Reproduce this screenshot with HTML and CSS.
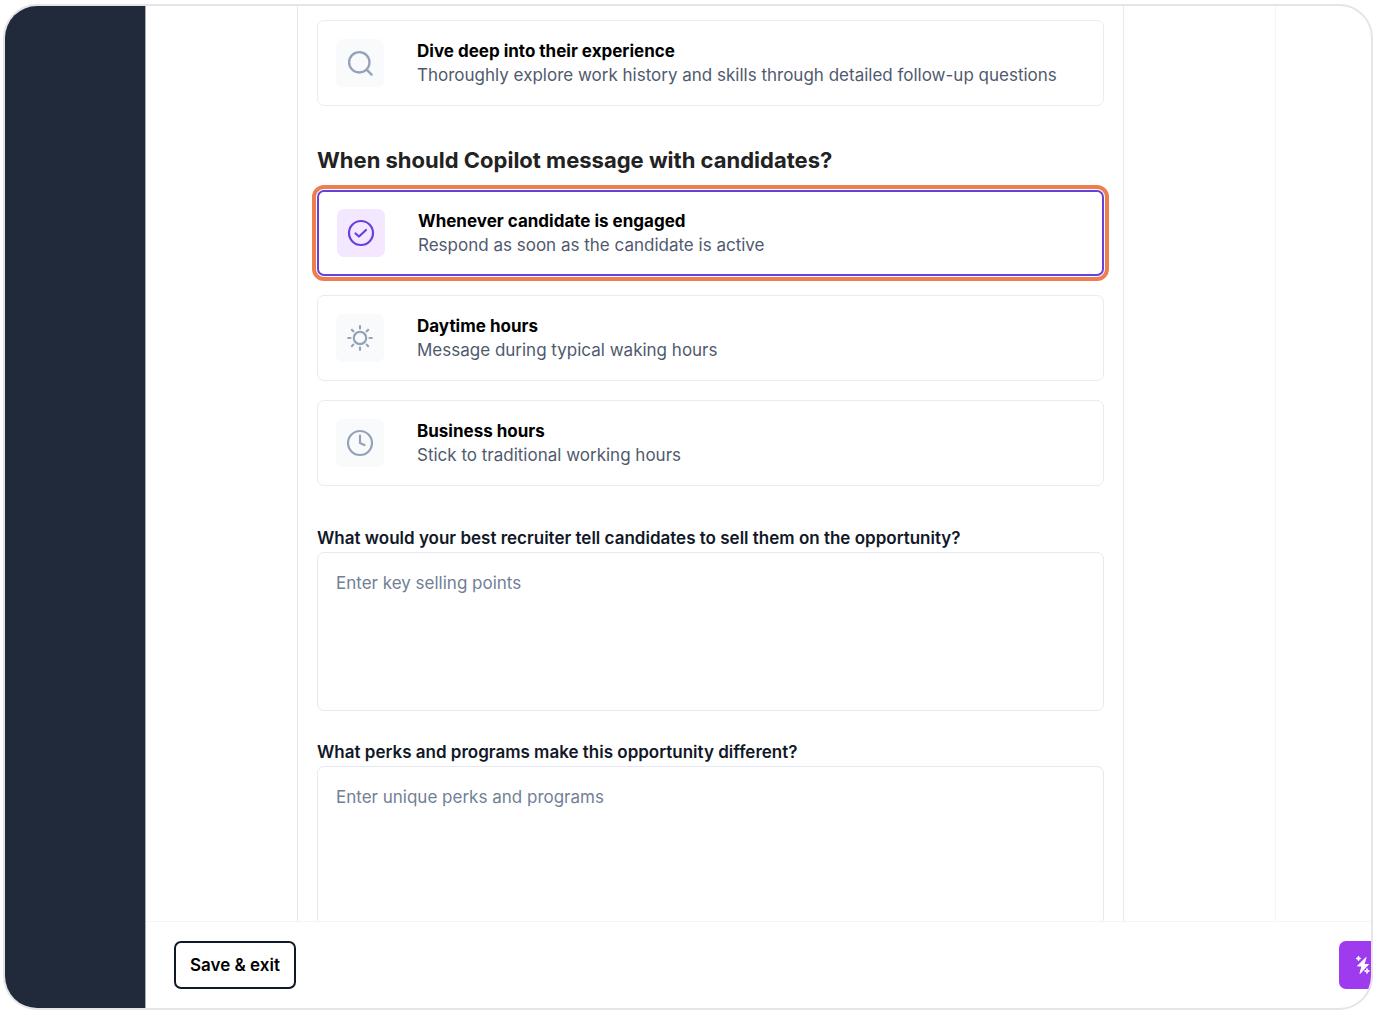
FILE: index.html
```html
<!DOCTYPE html>
<html lang="en">
<head>
    <meta charset="UTF-8">
    <meta name="viewport" content="width=device-width, initial-scale=1.0">
    <title>Copilot settings</title>
    <link rel="stylesheet" href="styles.css">
</head>
<body>
    <div class="window">
        <aside class="sidebar"></aside>
        <div class="main">
            <div class="scroll-area">
                <div class="page">
                    <form class="panel" id="copilot-form">
                        <label class="option">
                            <input type="radio" name="depth" value="deep">
                            <span class="option-icon">
                                <svg width="32" height="32" viewBox="0 0 32 32" fill="none" stroke="currentColor" stroke-width="2.3" stroke-linecap="round">
                                    <circle cx="15.3" cy="15.3" r="10.2"/>
                                    <path d="M22.6 22.6l5 5"/>
                                </svg>
                            </span>
                            <span class="option-text">
                                <span class="option-title">Dive deep into their experience</span>
                                <span class="option-desc">Thoroughly explore work history and skills through detailed follow-up questions</span>
                            </span>
                        </label>

                        <h2>When should Copilot message with candidates?</h2>
                        <div class="options">
                            <label class="option">
                                <input type="radio" name="timing" value="engaged" checked>
                                <span class="option-icon">
                                    <svg width="32" height="32" viewBox="0 0 32 32" fill="none" stroke="currentColor" stroke-width="2.2" stroke-linecap="round" stroke-linejoin="round">
                                        <circle cx="16" cy="16" r="12"/>
                                        <path d="M10.5 16.5l3.5 3 7-6.5"/>
                                    </svg>
                                </span>
                                <span class="option-text">
                                    <span class="option-title">Whenever candidate is engaged</span>
                                    <span class="option-desc">Respond as soon as the candidate is active</span>
                                </span>
                            </label>
                            <label class="option">
                                <input type="radio" name="timing" value="daytime">
                                <span class="option-icon">
                                    <svg width="32" height="32" viewBox="0 0 32 32" fill="none" stroke="currentColor" stroke-width="2.2" stroke-linecap="round">
                                        <circle cx="16" cy="16" r="6.2"/>
                                        <path d="M16 4.2v2.3M16 25.5v2.3M4.2 16h2.3M25.5 16h2.3M7.8 7.8l1.5 1.5M22.7 22.7l1.5 1.5M7.8 24.2l1.5-1.5M22.7 9.3l1.5-1.5"/>
                                    </svg>
                                </span>
                                <span class="option-text">
                                    <span class="option-title">Daytime hours</span>
                                    <span class="option-desc">Message during typical waking hours</span>
                                </span>
                            </label>
                            <label class="option">
                                <input type="radio" name="timing" value="business">
                                <span class="option-icon">
                                    <svg width="32" height="32" viewBox="0 0 32 32" fill="none" stroke="currentColor" stroke-width="2.2" stroke-linecap="round" stroke-linejoin="round">
                                        <circle cx="16" cy="16" r="12"/>
                                        <path d="M16 8.5V16l4.5 2"/>
                                    </svg>
                                </span>
                                <span class="option-text">
                                    <span class="option-title">Business hours</span>
                                    <span class="option-desc">Stick to traditional working hours</span>
                                </span>
                            </label>
                        </div>

                        <div class="fields">
                            <div class="field">
                                <label for="selling-points">What would your best recruiter tell candidates to sell them on the opportunity?</label>
                                <textarea id="selling-points" placeholder="Enter key selling points"></textarea>
                            </div>
                            <div class="field">
                                <label for="perks">What perks and programs make this opportunity different?</label>
                                <textarea id="perks" placeholder="Enter unique perks and programs"></textarea>
                            </div>
                        </div>
                    </form>
                </div>
            </div>
            <footer class="footer">
                <button type="submit" form="copilot-form" class="btn-save">Save &amp; exit</button>
                <button type="button" class="btn-launch" aria-label="Launch Copilot">
                    <svg width="20" height="24" viewBox="0 0 20 24" fill="currentColor" stroke="currentColor" stroke-linejoin="round">
                        <path d="M13 4.5L4.5 13H9l-2 7.5 8.500-9h-4.500z"/>
                        <path d="M5.5 3l.6 1.9 1.9.6-1.9.6-.6 1.900-.6-1.900L3 5.500l1.900-.6z"/>
                        <path d="M14 15.500l.6 1.900 1.900.6-1.900.6-.6 1.900-.6-1.900-1.900-.6 1.900-.6z"/>
                    </svg>
                </button>
            </footer>
        </div>
    </div>
</body>
</html>
```

FILE: styles.css
```css
* {
    box-sizing: border-box;
}

body {
    margin: 0;
    height: 100vh;
    padding: 4px 5px 6px 3px;
    background: #fff;
    font-family: Inter, sans-serif;
    font-size: 17px;
    line-height: 24px;
    color: #000;
}

.window {
    display: flex;
    height: 100%;
    border: 2px solid #e5e5e9;
    border-radius: 34px;
    overflow: hidden;
}

.sidebar {
    flex: none;
    width: 141px;
    background: #212a3a;
    border-right: 1px solid #a6aab1;
}

.main {
    flex: 1;
    min-width: 0;
    display: flex;
    flex-direction: column;
}

.scroll-area {
    flex: 1;
    min-height: 0;
    padding-right: 95px;
    overflow: hidden;
}

.page {
    height: 100%;
    padding: 0 151px;
    border-right: 1px solid #f4f5f9;
}

.panel {
    min-height: 100%;
    padding: 14px 19px;
    border: 1px solid #e6e8ef;
    border-width: 0 1px;
}

h2 {
    margin: 40px 0 16px;
    font-size: 22px;
    line-height: 28px;
    font-weight: 700;
    color: #222;
}

.options {
    display: flex;
    flex-direction: column;
    gap: 19px;
}

.option {
    display: flex;
    align-items: center;
    gap: 33px;
    padding: 18px;
    border: 1px solid #e9ebf3;
    border-radius: 7px;
    cursor: pointer;
}

.option input {
    position: absolute;
    opacity: 0;
}

.option-icon {
    flex: none;
    display: flex;
    align-items: center;
    justify-content: center;
    width: 48px;
    height: 48px;
    border-radius: 7px;
    background: #f8fafc;
    color: #94a3b8;
}

.option-text {
    display: flex;
    flex-direction: column;
}

.option-title {
    font-weight: 700;
}

.option-desc {
    color: #4f5a6e;
}

.option:has(:checked) {
    padding: 17px 18px;
    border: 2px solid #6741d9;
    outline: 4px solid #ee7d50;
    outline-offset: 1px;
}

.option:has(:checked) .option-icon {
    background: #f3e8ff;
    color: #6741d9;
}

.fields {
    display: flex;
    flex-direction: column;
    gap: 29px;
    margin-top: 40px;
}

.field label {
    display: block;
    margin-bottom: 2px;
    font-weight: 600;
    color: #111827;
}

textarea {
    display: block;
    width: 100%;
    height: 159px;
    padding: 18px;
    border: 1px solid #e6e9f2;
    border-radius: 7px;
    background: #fff;
    font: inherit;
    resize: none;
}

textarea::placeholder {
    color: #718096;
    opacity: 1;
}

.footer {
    display: flex;
    justify-content: space-between;
    padding: 19px 0 19px 28px;
    border-top: 1px solid #f3f5f9;
}

button {
    height: 48px;
    border-radius: 7px;
    font: inherit;
    cursor: pointer;
}

.btn-save {
    padding: 0 14px;
    border: 2px solid #111827;
    background: #fff;
    font-weight: 600;
    color: #000;
}

/* runs past the right edge of the window */
.btn-launch {
    display: flex;
    align-items: center;
    justify-content: center;
    width: 48px;
    margin-right: -16px;
    padding: 0;
    border: 0;
    background: #9f3bee;
    color: #fff;
}
```
